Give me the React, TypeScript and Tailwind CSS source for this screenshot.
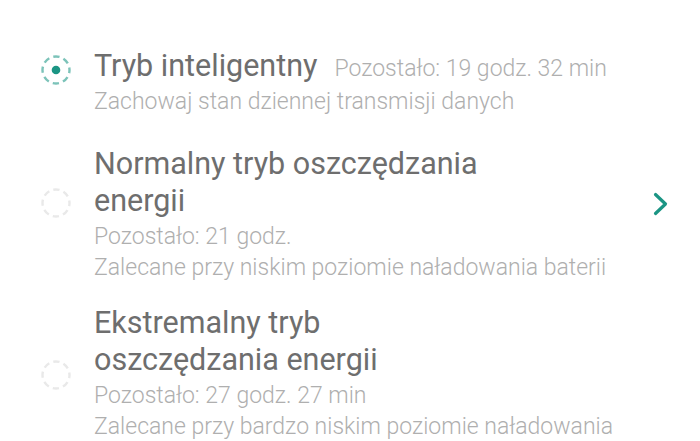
import React from "react";

const TEAL = "#1b9584";

function Radio({ selected }: { selected: boolean }) {
  const r = 13.5;
  const c = 2 * Math.PI * r;
  const period = c / 8;
  const dash = period * 0.6;
  return (
    <svg width="32" height="32" viewBox="0 0 32 32">
      <circle
        cx="16"
        cy="16"
        r={r}
        fill="none"
        stroke={selected ? "#7cc3b9" : "#e9e9e9"}
        strokeWidth="2.4"
        strokeDasharray={`${dash} ${period - dash}`}
        strokeDashoffset={dash / 2}
        strokeLinecap="butt"
      />
      {selected && <circle cx="16" cy="16" r="4.3" fill={TEAL} />}
    </svg>
  );
}

function Chevron() {
  return (
    <svg width="16" height="24" viewBox="0 0 16 24">
      <polyline
        points="2.5,2.5 12.5,12 2.5,21.5"
        fill="none"
        stroke={TEAL}
        strokeWidth="3.2"
        strokeLinecap="round"
        strokeLinejoin="round"
      />
    </svg>
  );
}

export default function App() {
  const title = "font-['Roboto',sans-serif] text-[30.5px] leading-[37px] text-[#6e6e6e]";
  const sub =
    "font-['Roboto_Light',Roboto,sans-serif] text-[23px] leading-[31px] font-light text-[#afafaf]";
  return (
    <div className="w-[700px] h-[441px] overflow-hidden bg-white font-['Roboto',sans-serif]">
      <div className="flex flex-col pl-[40px] pt-[47px]">
        {/* Item 1 */}
        <div className="flex items-start">
          <div className="w-[32px] mt-[7px] shrink-0">
            <Radio selected />
          </div>
          <div className="ml-[22px] flex flex-col">
            <div className="flex items-baseline gap-[17px]">
              <span className={title}>Tryb inteligentny</span>
              <span className={sub}>Pozostało: 19 godz. 32 min</span>
            </div>
            <div className={`mt-[2px] ${sub}`}>Zachowaj stan dziennej transmisji danych</div>
          </div>
        </div>

        {/* Item 2 */}
        <div className="flex items-start mt-[28px]">
          <div className="w-[32px] mt-[42px] shrink-0">
            <Radio selected={false} />
          </div>
          <div className="ml-[22px] flex flex-col flex-1">
            <div className={`w-[400px] ${title}`}>Normalny tryb oszczędzania energii</div>
            <div className={`mt-[2px] ${sub}`}>
              <div>Pozostało: 21 godz.</div>
              <div>Zalecane przy niskim poziomie naładowania baterii</div>
            </div>
          </div>
          <div className="mt-[47px] mr-[31px] shrink-0">
            <Chevron />
          </div>
        </div>

        {/* Item 3 */}
        <div className="flex items-start mt-[21px]">
          <div className="w-[32px] mt-[55px] shrink-0">
            <Radio selected={false} />
          </div>
          <div className="ml-[22px] flex flex-col">
            <div className={`w-[400px] ${title}`}>Ekstremalny tryb oszczędzania energii</div>
            <div className={`mt-[2px] w-[545px] ${sub}`}>
              <div>Pozostało: 27 godz. 27 min</div>
              <div>Zalecane przy bardzo niskim poziomie naładowania baterii</div>
            </div>
          </div>
        </div>
      </div>
    </div>
  );
}
